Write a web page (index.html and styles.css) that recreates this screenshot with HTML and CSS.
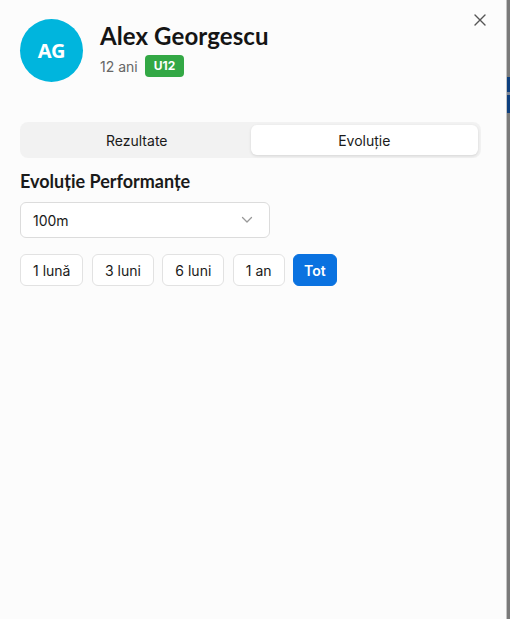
FILE: index.html
```html
<!DOCTYPE html>
<html lang="ro">
<head>
<meta charset="utf-8">
<title>Alex Georgescu</title>
<link rel="stylesheet" href="styles.css">
</head>
<body>
<div class="screen">
  <main class="panel">
    <button class="close" aria-label="Închide">
      <svg width="12" height="12" viewBox="0 0 12 12"><path d="M1 1L11 11M11 1L1 11" stroke="#555" stroke-width="1.4" stroke-linecap="round"/></svg>
    </button>
    <header class="profile">
      <div class="avatar">AG</div>
      <div class="info">
        <h1 class="name">Alex Georgescu</h1>
        <div class="meta"><span class="age">12 ani</span><span class="badge">U12</span></div>
      </div>
    </header>
    <nav class="tabs">
      <button class="tab">Rezultate</button>
      <button class="tab active">Evoluție</button>
    </nav>
    <h2 class="section-title">Evoluție Performanțe</h2>
    <div class="select">
      <span>100m</span>
      <svg width="12" height="8" viewBox="0 0 12 8"><path d="M1.5 1.5L6 6L10.5 1.5" fill="none" stroke="#999" stroke-width="1.3" stroke-linecap="round" stroke-linejoin="round"/></svg>
    </div>
    <div class="ranges">
      <button class="range">1 lună</button>
      <button class="range">3 luni</button>
      <button class="range">6 luni</button>
      <button class="range">1 an</button>
      <button class="range active">Tot</button>
    </div>
  </main>
  <div class="backdrop"></div>
</div>
</body>
</html>
```
FILE: styles.css
```css
html, body {
  margin: 0;
  padding: 0;
  height: 100%;
}
body {
  font-family: Inter, "Noto Sans", sans-serif;
  color: #1a1a1a;
  background: #fcfcfc;
}
.screen {
  display: flex;
  height: 619px;
  width: 510px;
  overflow: hidden;
}
.panel {
  position: relative;
  width: 507px;
  box-sizing: border-box;
  padding: 19px 25px 0 20px;
  background: #fcfcfc;
}
.backdrop {
  width: 3px;
  background: linear-gradient(to bottom, #7a7a7a 0, #7a7a7a 77px, #0d3f7e 77px, #0d3f7e 92px, #7c8594 92px, #7c8594 95px, #0d3f7e 95px, #0d3f7e 113px, #7a7a7a 113px);
  border-left: 1px solid #c4c4c4;
}
.close {
  position: absolute;
  top: 12px;
  right: 18px;
  width: 16px;
  height: 16px;
  padding: 0;
  border: 0;
  background: none;
  display: flex;
  align-items: center;
  justify-content: center;
}
.profile {
  display: flex;
  align-items: center;
  gap: 17px;
}
.avatar {
  width: 63px;
  height: 63px;
  border-radius: 50%;
  background: #00b5dd;
  color: #fff;
  font-family: "Noto Sans", sans-serif;
  font-weight: 700;
  font-size: 20px;
  display: flex;
  align-items: center;
  justify-content: center;
  letter-spacing: -0.3px;
}
.info {
  display: flex;
  flex-direction: column;
  gap: 4px;
  margin-top: -3px;
}
.name {
  margin: 0;
  font-family: Lato, sans-serif;
  font-weight: 700;
  font-size: 24px;
  line-height: 30px;
  color: #151515;
  letter-spacing: 0.1px;
}
.meta {
  display: flex;
  align-items: center;
  gap: 7px;
}
.age {
  font-size: 14px;
  color: #666;
}
.badge {
  background: #33a845;
  color: #fff;
  font-size: 12px;
  font-weight: 700;
  line-height: 22px;
  padding: 0 9px;
  border-radius: 4px;
}
.tabs {
  display: grid;
  grid-template-columns: 1fr 1fr;
  gap: 0;
  margin-top: 40px;
  padding: 3px;
  background: #f2f2f2;
  border-radius: 8px;
  height: 36px;
  box-sizing: border-box;
}
.tab {
  border: 0;
  background: none;
  font-family: Inter, sans-serif;
  font-size: 14px;
  color: #1a1a1a;
  border-radius: 6px;
  padding: 0;
}
.tab.active {
  background: #fff;
  box-shadow: 0 1px 3px rgba(0,0,0,0.12);
}
.section-title {
  margin: 11px 0 0;
  font-family: Lato, sans-serif;
  font-weight: 700;
  font-size: 18px;
  line-height: 24px;
  color: #1a1a1a;
}
.select {
  margin-top: 9px;
  width: 250px;
  height: 36px;
  box-sizing: border-box;
  border: 1px solid #dcdcdc;
  border-radius: 6px;
  background: #fff;
  display: flex;
  align-items: center;
  justify-content: space-between;
  padding: 0 16px 0 12px;
  font-size: 14px;
  color: #1a1a1a;
}
.ranges {
  display: flex;
  gap: 8.5px;
  margin-top: 16px;
}
.range {
  height: 32px;
  padding: 0 12px;
  border: 1px solid #e2e2e2;
  border-radius: 6px;
  background: #fff;
  font-family: Inter, sans-serif;
  font-size: 14px;
  color: #1a1a1a;
}
.range.active {
  background: #0a72e0;
  border-color: #0a72e0;
  color: #fff;
  font-weight: 600;
  padding: 0 10px;
}
```
